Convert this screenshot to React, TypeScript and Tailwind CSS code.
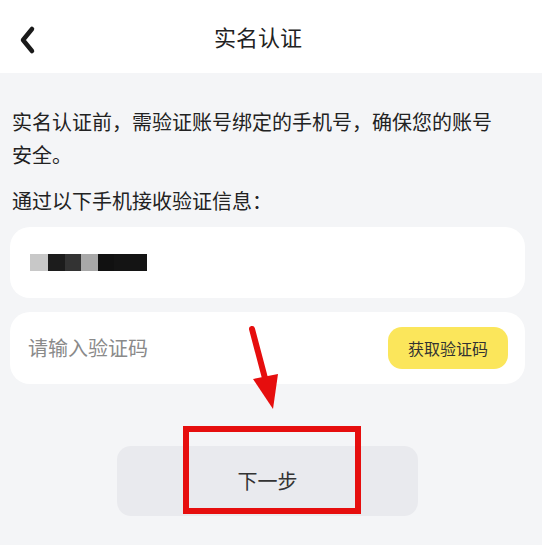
const mosaic = [
  { w: 18, c: "#c8c8c8" },
  { w: 17, c: "#1c1c1c" },
  { w: 16, c: "#333333" },
  { w: 17, c: "#a8a8a8" },
  { w: 16, c: "#111111" },
  { w: 33, c: "#141414" },
];

const App = () => {
  return (
    <div
      className="relative w-[542px] h-[545px] overflow-hidden bg-[#f4f5f7] text-[#222]"
      style={{ fontFamily: '"Noto Sans CJK SC", "Noto Sans", sans-serif' }}
    >
      {/* header */}
      <div className="relative flex h-[73px] items-center justify-center bg-white">
        <svg className="absolute left-[18px] top-[25px]" width="20" height="30" viewBox="0 0 20 30">
          <polyline
            points="14,4 5,15 14,26"
            fill="none"
            stroke="#1a1a1a"
            strokeWidth="4.5"
            strokeLinecap="round"
            strokeLinejoin="round"
          />
        </svg>
        <span className="pr-[26px] text-[22px]">实名认证</span>
      </div>

      <div className="pl-3 pr-[40px] pt-8 text-[20px] leading-[33px]">
        实名认证前，需验证账号绑定的手机号，确保您的账号安全。
      </div>
      <div className="mt-[13px] pl-3 text-[20px] leading-[33px]">通过以下手机接收验证信息：</div>

      <div className="ml-[10px] mt-[10px] flex h-[71px] w-[515px] items-center rounded-[20px] bg-white pl-5">
        {mosaic.map((m, i) => (
          <div key={i} className="h-[17px]" style={{ width: m.w, background: m.c }} />
        ))}
      </div>

      <div className="ml-[10px] mt-[14px] flex h-[72px] w-[515px] items-center justify-between rounded-[20px] bg-white pl-[18px] pr-[17px]">
        <span className="text-[20px] text-[#8a8a8a]">请输入验证码</span>
        <button className="flex h-[42px] w-[120px] items-center justify-center rounded-[14px] bg-[#fbe65b] text-[16px] text-[#333]">
          获取验证码
        </button>
      </div>

      <button className="ml-[117px] mt-[62px] flex h-[70px] w-[301px] items-center justify-center rounded-[14px] bg-[#e9eaee] text-[20px] text-[#333]">
        下一步
      </button>

      {/* annotation overlay */}
      <div className="absolute left-[183px] top-[426px] h-[88px] w-[178px] border-[6px] border-[#e60e0e]" />
      <svg className="absolute left-0 top-0" width="542" height="545" viewBox="0 0 542 545">
        <line x1="252" y1="329" x2="266" y2="382" stroke="#e60e0e" strokeWidth="6" strokeLinecap="round" />
        <polygon points="253,379 278,374 273,409" fill="#e60e0e" />
      </svg>
    </div>
  );
};

export default App;
